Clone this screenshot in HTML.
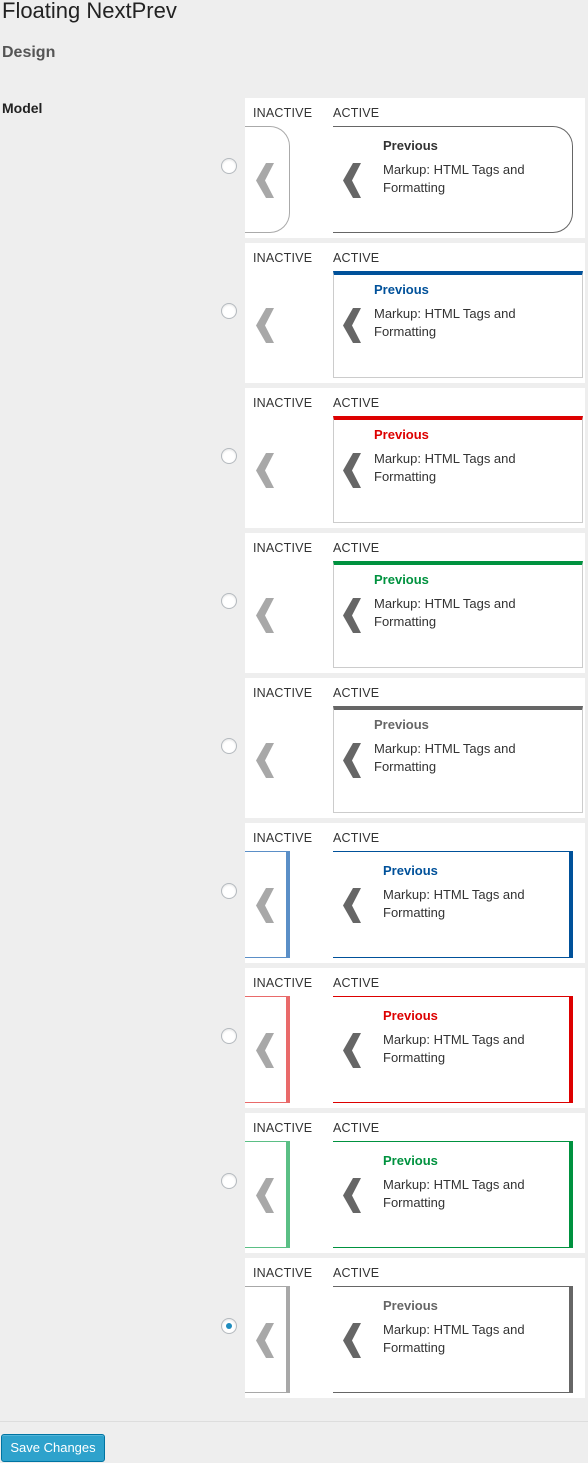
<!DOCTYPE html>
<html><head><meta charset="utf-8"><style>
body{margin:0;width:588px;height:1463px;background:#eeeeee;font-family:"Liberation Sans",sans-serif;color:#222;position:relative;overflow:hidden}
.a{position:absolute}
h1{position:absolute;left:2px;top:-2px;margin:0;font-weight:normal;font-size:22px;color:#222}
.p{position:absolute;left:245px;width:340px;height:140px;background:#fff}
.lab{position:absolute;top:8px;font-size:12.5px;color:#333;letter-spacing:.2px}
.radio{position:absolute;left:-24px;top:60px;width:14px;height:14px;border:1px solid #b4b9be;border-radius:50%;background:#fff;box-shadow:inset 0 1px 2px rgba(0,0,0,.1)}
.radio.on::after{content:"";position:absolute;left:4px;top:4px;width:6px;height:6px;border-radius:50%;background:#1e8cbe}
.ib{position:absolute;left:0;top:28px;height:107px;box-sizing:border-box}
.ab{position:absolute;left:88px;top:28px;height:107px;box-sizing:border-box}
.chev{position:absolute;top:65px}
.t{position:absolute;font-size:13px;line-height:18px;color:#333}
.t b{display:block;margin-bottom:6px}
</style></head><body>
<h1>Floating NextPrev</h1>
<div class="a" style="left:2px;top:44px;font-size:16px;font-weight:bold;color:#555">Design</div>
<div class="a" style="left:2px;top:100px;font-size:14px;font-weight:bold;color:#222">Model</div>

<div class="p" style="top:98px">
<div class="radio"></div><div class="lab" style="left:8px">INACTIVE</div><div class="lab" style="left:88px">ACTIVE</div>
<div class="ib" style="width:45px;border:1px solid #aaa;border-left:none;border-radius:0 20px 20px 0"></div>
<svg class="chev" style="left:11px" width="18" height="35"><polygon points="18,0 9,17.5 18,35 10,35 0,17.5 10,0" fill="#a8a8a8"/></svg>
<div class="ab" style="width:240px;border:1px solid #666;border-left:none;border-radius:0 20px 20px 0"></div>
<svg class="chev" style="left:98px" width="18" height="35"><polygon points="18,0 9,17.5 18,35 10,35 0,17.5 10,0" fill="#666"/></svg>
<div class="t" style="left:138px;top:39px"><b style="color:#333">Previous</b>Markup: HTML Tags and<br>Formatting</div>
</div>

<div class="p" style="top:243px"><div class="radio"></div><div class="lab" style="left:8px">INACTIVE</div><div class="lab" style="left:88px">ACTIVE</div>
<svg class="chev" style="left:11px" width="18" height="35"><polygon points="18,0 9,17.5 18,35 10,35 0,17.5 10,0" fill="#a8a8a8"/></svg>
<div class="ab" style="width:250px;border:1px solid #ccc;border-top:4px solid #00519a"></div>
<svg class="chev" style="left:98px" width="18" height="35"><polygon points="18,0 9,17.5 18,35 10,35 0,17.5 10,0" fill="#666"/></svg>
<div class="t" style="left:129px;top:38px"><b style="color:#00519a">Previous</b>Markup: HTML Tags and<br>Formatting</div></div>

<div class="p" style="top:388px"><div class="radio"></div><div class="lab" style="left:8px">INACTIVE</div><div class="lab" style="left:88px">ACTIVE</div>
<svg class="chev" style="left:11px" width="18" height="35"><polygon points="18,0 9,17.5 18,35 10,35 0,17.5 10,0" fill="#a8a8a8"/></svg>
<div class="ab" style="width:250px;border:1px solid #ccc;border-top:4px solid #d00"></div>
<svg class="chev" style="left:98px" width="18" height="35"><polygon points="18,0 9,17.5 18,35 10,35 0,17.5 10,0" fill="#666"/></svg>
<div class="t" style="left:129px;top:38px"><b style="color:#d00">Previous</b>Markup: HTML Tags and<br>Formatting</div></div>

<div class="p" style="top:533px"><div class="radio"></div><div class="lab" style="left:8px">INACTIVE</div><div class="lab" style="left:88px">ACTIVE</div>
<svg class="chev" style="left:11px" width="18" height="35"><polygon points="18,0 9,17.5 18,35 10,35 0,17.5 10,0" fill="#a8a8a8"/></svg>
<div class="ab" style="width:250px;border:1px solid #ccc;border-top:4px solid #00923f"></div>
<svg class="chev" style="left:98px" width="18" height="35"><polygon points="18,0 9,17.5 18,35 10,35 0,17.5 10,0" fill="#666"/></svg>
<div class="t" style="left:129px;top:38px"><b style="color:#00923f">Previous</b>Markup: HTML Tags and<br>Formatting</div></div>

<div class="p" style="top:678px"><div class="radio"></div><div class="lab" style="left:8px">INACTIVE</div><div class="lab" style="left:88px">ACTIVE</div>
<svg class="chev" style="left:11px" width="18" height="35"><polygon points="18,0 9,17.5 18,35 10,35 0,17.5 10,0" fill="#a8a8a8"/></svg>
<div class="ab" style="width:250px;border:1px solid #ccc;border-top:4px solid #666"></div>
<svg class="chev" style="left:98px" width="18" height="35"><polygon points="18,0 9,17.5 18,35 10,35 0,17.5 10,0" fill="#666"/></svg>
<div class="t" style="left:129px;top:38px"><b style="color:#666">Previous</b>Markup: HTML Tags and<br>Formatting</div></div>

<div class="p" style="top:823px"><div class="radio"></div><div class="lab" style="left:8px">INACTIVE</div><div class="lab" style="left:88px">ACTIVE</div>
<div class="ib" style="width:45px;border:1px solid #5b8fc7;border-left:none;border-right:4px solid #5b8fc7"></div>
<svg class="chev" style="left:11px" width="18" height="35"><polygon points="18,0 9,17.5 18,35 10,35 0,17.5 10,0" fill="#a8a8a8"/></svg>
<div class="ab" style="width:240px;border:1px solid #00519a;border-left:none;border-right:4px solid #00519a"></div>
<svg class="chev" style="left:98px" width="18" height="35"><polygon points="18,0 9,17.5 18,35 10,35 0,17.5 10,0" fill="#666"/></svg>
<div class="t" style="left:138px;top:39px"><b style="color:#00519a">Previous</b>Markup: HTML Tags and<br>Formatting</div></div>

<div class="p" style="top:968px"><div class="radio"></div><div class="lab" style="left:8px">INACTIVE</div><div class="lab" style="left:88px">ACTIVE</div>
<div class="ib" style="width:45px;border:1px solid #e96a6a;border-left:none;border-right:4px solid #e96a6a"></div>
<svg class="chev" style="left:11px" width="18" height="35"><polygon points="18,0 9,17.5 18,35 10,35 0,17.5 10,0" fill="#a8a8a8"/></svg>
<div class="ab" style="width:240px;border:1px solid #d00;border-left:none;border-right:4px solid #d00"></div>
<svg class="chev" style="left:98px" width="18" height="35"><polygon points="18,0 9,17.5 18,35 10,35 0,17.5 10,0" fill="#666"/></svg>
<div class="t" style="left:138px;top:39px"><b style="color:#d00">Previous</b>Markup: HTML Tags and<br>Formatting</div></div>

<div class="p" style="top:1113px"><div class="radio"></div><div class="lab" style="left:8px">INACTIVE</div><div class="lab" style="left:88px">ACTIVE</div>
<div class="ib" style="width:45px;border:1px solid #5bbf85;border-left:none;border-right:4px solid #5bbf85"></div>
<svg class="chev" style="left:11px" width="18" height="35"><polygon points="18,0 9,17.5 18,35 10,35 0,17.5 10,0" fill="#a8a8a8"/></svg>
<div class="ab" style="width:240px;border:1px solid #00923f;border-left:none;border-right:4px solid #00923f"></div>
<svg class="chev" style="left:98px" width="18" height="35"><polygon points="18,0 9,17.5 18,35 10,35 0,17.5 10,0" fill="#666"/></svg>
<div class="t" style="left:138px;top:39px"><b style="color:#00923f">Previous</b>Markup: HTML Tags and<br>Formatting</div></div>

<div class="p" style="top:1258px"><div class="radio on"></div><div class="lab" style="left:8px">INACTIVE</div><div class="lab" style="left:88px">ACTIVE</div>
<div class="ib" style="width:45px;border:1px solid #a8a8a8;border-left:none;border-right:4px solid #a8a8a8"></div>
<svg class="chev" style="left:11px" width="18" height="35"><polygon points="18,0 9,17.5 18,35 10,35 0,17.5 10,0" fill="#a8a8a8"/></svg>
<div class="ab" style="width:240px;border:1px solid #666;border-left:none;border-right:4px solid #666"></div>
<svg class="chev" style="left:98px" width="18" height="35"><polygon points="18,0 9,17.5 18,35 10,35 0,17.5 10,0" fill="#666"/></svg>
<div class="t" style="left:138px;top:39px"><b style="color:#666">Previous</b>Markup: HTML Tags and<br>Formatting</div></div>

<div class="a" style="left:0;top:1421px;width:588px;height:1px;background:#ddd"></div>
<div class="a" style="left:1px;top:1434px;width:104px;height:28px;box-sizing:border-box;background:#2ea2cc;border:1px solid #0074a2;border-radius:3px;color:#fff;font-size:13px;line-height:26px;text-align:center;box-shadow:inset 0 1px 0 rgba(120,200,230,.5)">Save Changes</div>
</body></html>
